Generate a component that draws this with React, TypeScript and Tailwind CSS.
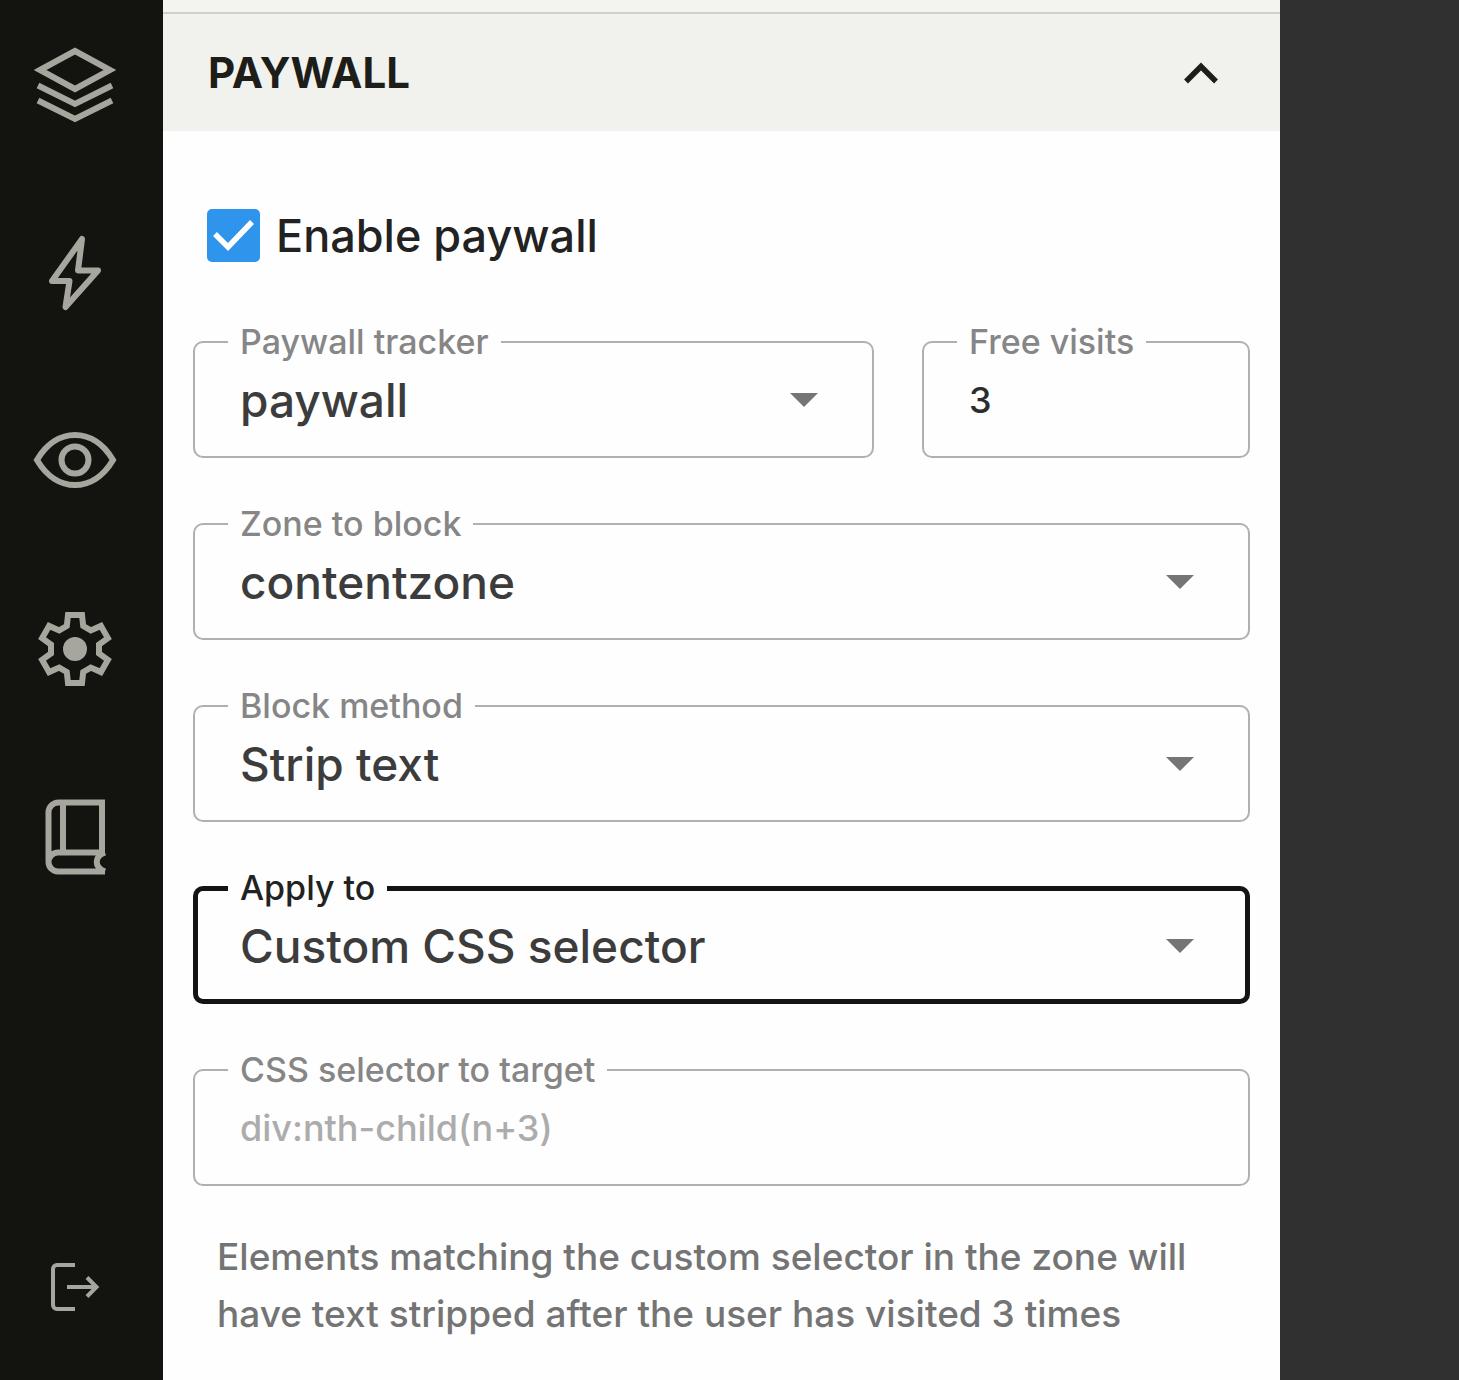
import React, { useState } from "react";
import clsx from "clsx";

const navItems = [
  {
    name: "Layers",
    icon: (
      <>
        <path d="M7 27 42 8l35 19-35 19Z" />
        <path d="M5 42.5 42 61l37-18.5M5 57.5 42 76l37-18.5" />
      </>
    ),
  },
  {
    name: "Actions",
    icon: <path strokeLinejoin="round" d="M49 8 45 39.5H65L32.5 76 36.5 50H19Z" />,
  },
  {
    name: "Preview",
    icon: (
      <>
        <path d="M4 41C14 24 28 16 42 16S70 24 80 41C70 58 56 66 42 66S14 58 4 41Z" />
        <circle cx="42" cy="41" r="13.5" />
      </>
    ),
  },
  {
    name: "Settings",
    icon: (
      <g transform="translate(42 42)">
        <path d="M-8.2-23-7-34H7L8.2-23 15.8-18.6 25.9-23.1 32.9-10.9 24-4.4V4.4L32.9 10.9 25.9 23.1 15.8 18.6 8.2 23 7 34H-7L-8.2 23-15.8 18.6-25.9 23.1-32.9 10.9-24 4.4V-4.4L-32.9-10.9-25.9-23.1-15.8-18.6Z" />
        <circle r="12" fill="currentColor" stroke="none" />
      </g>
    ),
  },
  {
    name: "Docs",
    icon: (
      <>
        <path d="M15.5 67V17.5a10 10 0 0 1 10-10H69V57.5H25a9.5 9.5 0 0 0 0 19H72" />
        <path d="M30 7.5V57.5M72 57.5c-11 4-11 15 0 19" />
      </>
    ),
  },
];

function NavButton({ name, children, thin }: { name: string; children: React.ReactNode; thin?: boolean }) {
  return (
    <button type="button" aria-label={name} className="block size-[84px] text-[#a6a69e]">
      <svg viewBox="0 0 84 84" fill="none" stroke="currentColor" strokeWidth={thin ? 4 : 6} className="size-full">
        {children}
      </svg>
    </button>
  );
}

type FieldProps = {
  id: string;
  label: string;
  active?: boolean;
  className?: string;
  children: React.ReactNode;
};

function Field({ id, label, active, className, children }: FieldProps) {
  return (
    <fieldset
      className={clsx(
        "h-[134px] min-w-0 rounded-[10px]",
        active ? "border-[5px] border-[#141414] px-[30px]" : "border-2 border-[#b0b0b0] px-[33px]",
        className
      )}
    >
      <legend className={clsx("px-3 text-[34px] leading-[36px]", active ? "text-[#222222]" : "text-[#868686]")}>
        <label htmlFor={id}>{label}</label>
      </legend>
      <div className="grid h-[80px] items-center pr-[21px] pl-3">{children}</div>
    </fieldset>
  );
}

function SelectField({ options, ...field }: Omit<FieldProps, "children"> & { options: string[] }) {
  const [value, setValue] = useState(options[0]);

  return (
    <Field {...field}>
      <select
        id={field.id}
        value={value}
        onChange={(e) => setValue(e.target.value)}
        className="col-start-1 row-start-1 h-full w-full appearance-none bg-transparent text-[46px] text-[#3c3c3c] outline-none"
      >
        {options.map((option) => (
          <option key={option}>{option}</option>
        ))}
      </select>
      <svg
        viewBox="0 0 28 14"
        className="pointer-events-none col-start-1 row-start-1 h-[14px] w-[28px] justify-self-end fill-[#757575]"
      >
        <path d="M0 0H28L14 14Z" />
      </svg>
    </Field>
  );
}

export default function App() {
  const [open, setOpen] = useState(true);
  const [enabled, setEnabled] = useState(true);
  const [visits, setVisits] = useState("3");
  const [selector, setSelector] = useState("");

  return (
    <div className="flex min-h-screen bg-[#303030] font-['Inter',sans-serif] font-medium">
      <nav className="flex w-[163px] shrink-0 flex-col items-center gap-[104px] bg-[#13130f] pt-[43px] pr-[13px] pb-[51px]">
        {navItems.map((item) => (
          <NavButton key={item.name} name={item.name}>
            {item.icon}
          </NavButton>
        ))}
        <div className="mt-auto">
          <NavButton name="Log out" thin>
            <path d="M42 20H24a4 4 0 0 0-4 4V60a4 4 0 0 0 4 4H42M34 42H63M54 32.5l9.5 9.5-9.5 9.5" />
          </NavButton>
        </div>
      </nav>

      <main className="min-w-0 flex-1 bg-[#fefefe]">
        <div className="h-3 bg-[#f3f4ef]" />
        <h2>
          <button
            type="button"
            aria-expanded={open}
            onClick={() => setOpen(!open)}
            className="flex h-[119px] w-full items-center justify-between border-t-2 border-[#cfd0cc] bg-[#f1f2ed] pr-[60px] pl-[45px] text-[42px] font-bold text-[#1d1d1a]"
          >
            PAYWALL
            <svg
              viewBox="0 0 38 24"
              fill="none"
              stroke="currentColor"
              strokeWidth="5.5"
              className={clsx("h-[24px] w-[38px]", !open && "rotate-180")}
            >
              <path d="M4 20.5 19 5.5l15 15" />
            </svg>
          </button>
        </h2>

        {open && (
          <div className="px-[30px] pt-[78px] pb-9">
            <div className="mb-[62px] flex items-center gap-4 pl-[14px]">
              <span className="grid size-[53px]">
                <input
                  id="enable"
                  type="checkbox"
                  checked={enabled}
                  onChange={(e) => setEnabled(e.target.checked)}
                  className="col-start-1 row-start-1 appearance-none rounded-[5px] border-2 border-[#2f94eb] checked:bg-[#2f94eb]"
                />
                {enabled && (
                  <svg
                    viewBox="0 0 53 53"
                    fill="none"
                    stroke="white"
                    strokeWidth="5.5"
                    className="pointer-events-none col-start-1 row-start-1"
                  >
                    <path d="M8 25 21 38 45 13" />
                  </svg>
                )}
              </span>
              <label htmlFor="enable" className="text-[45px] leading-[53px] text-[#222222]">
                Enable paywall
              </label>
            </div>

            <div className="flex flex-col gap-12">
              <div className="flex gap-12">
                <SelectField id="tracker" label="Paywall tracker" options={["paywall"]} className="flex-1" />
                <Field id="visits" label="Free visits" className="w-[328px]">
                  <input
                    id="visits"
                    type="text"
                    inputMode="numeric"
                    value={visits}
                    onChange={(e) => setVisits(e.target.value)}
                    className="h-full w-full bg-transparent text-[36px] text-[#2c2c2c] outline-none"
                  />
                </Field>
              </div>
              <SelectField id="zone" label="Zone to block" options={["contentzone"]} />
              <SelectField id="method" label="Block method" options={["Strip text", "Hide"]} />
              <SelectField id="apply" label="Apply to" options={["Custom CSS selector", "Whole zone"]} active />
              <Field id="selector" label="CSS selector to target">
                <input
                  id="selector"
                  type="text"
                  value={selector}
                  onChange={(e) => setSelector(e.target.value)}
                  placeholder="div:nth-child(n+3)"
                  className="h-full w-full bg-transparent text-[36px] text-[#2c2c2c] outline-none placeholder:text-[#acacac]"
                />
              </Field>
            </div>

            <p className="mt-[42px] px-6 text-[37px] leading-[57px] text-[#747474]">
              {`Elements matching the custom selector in the zone will have text stripped after the user has visited ${visits} times`}
            </p>
          </div>
        )}
      </main>

      <div className="w-[179px] shrink-0" />
    </div>
  );
}
